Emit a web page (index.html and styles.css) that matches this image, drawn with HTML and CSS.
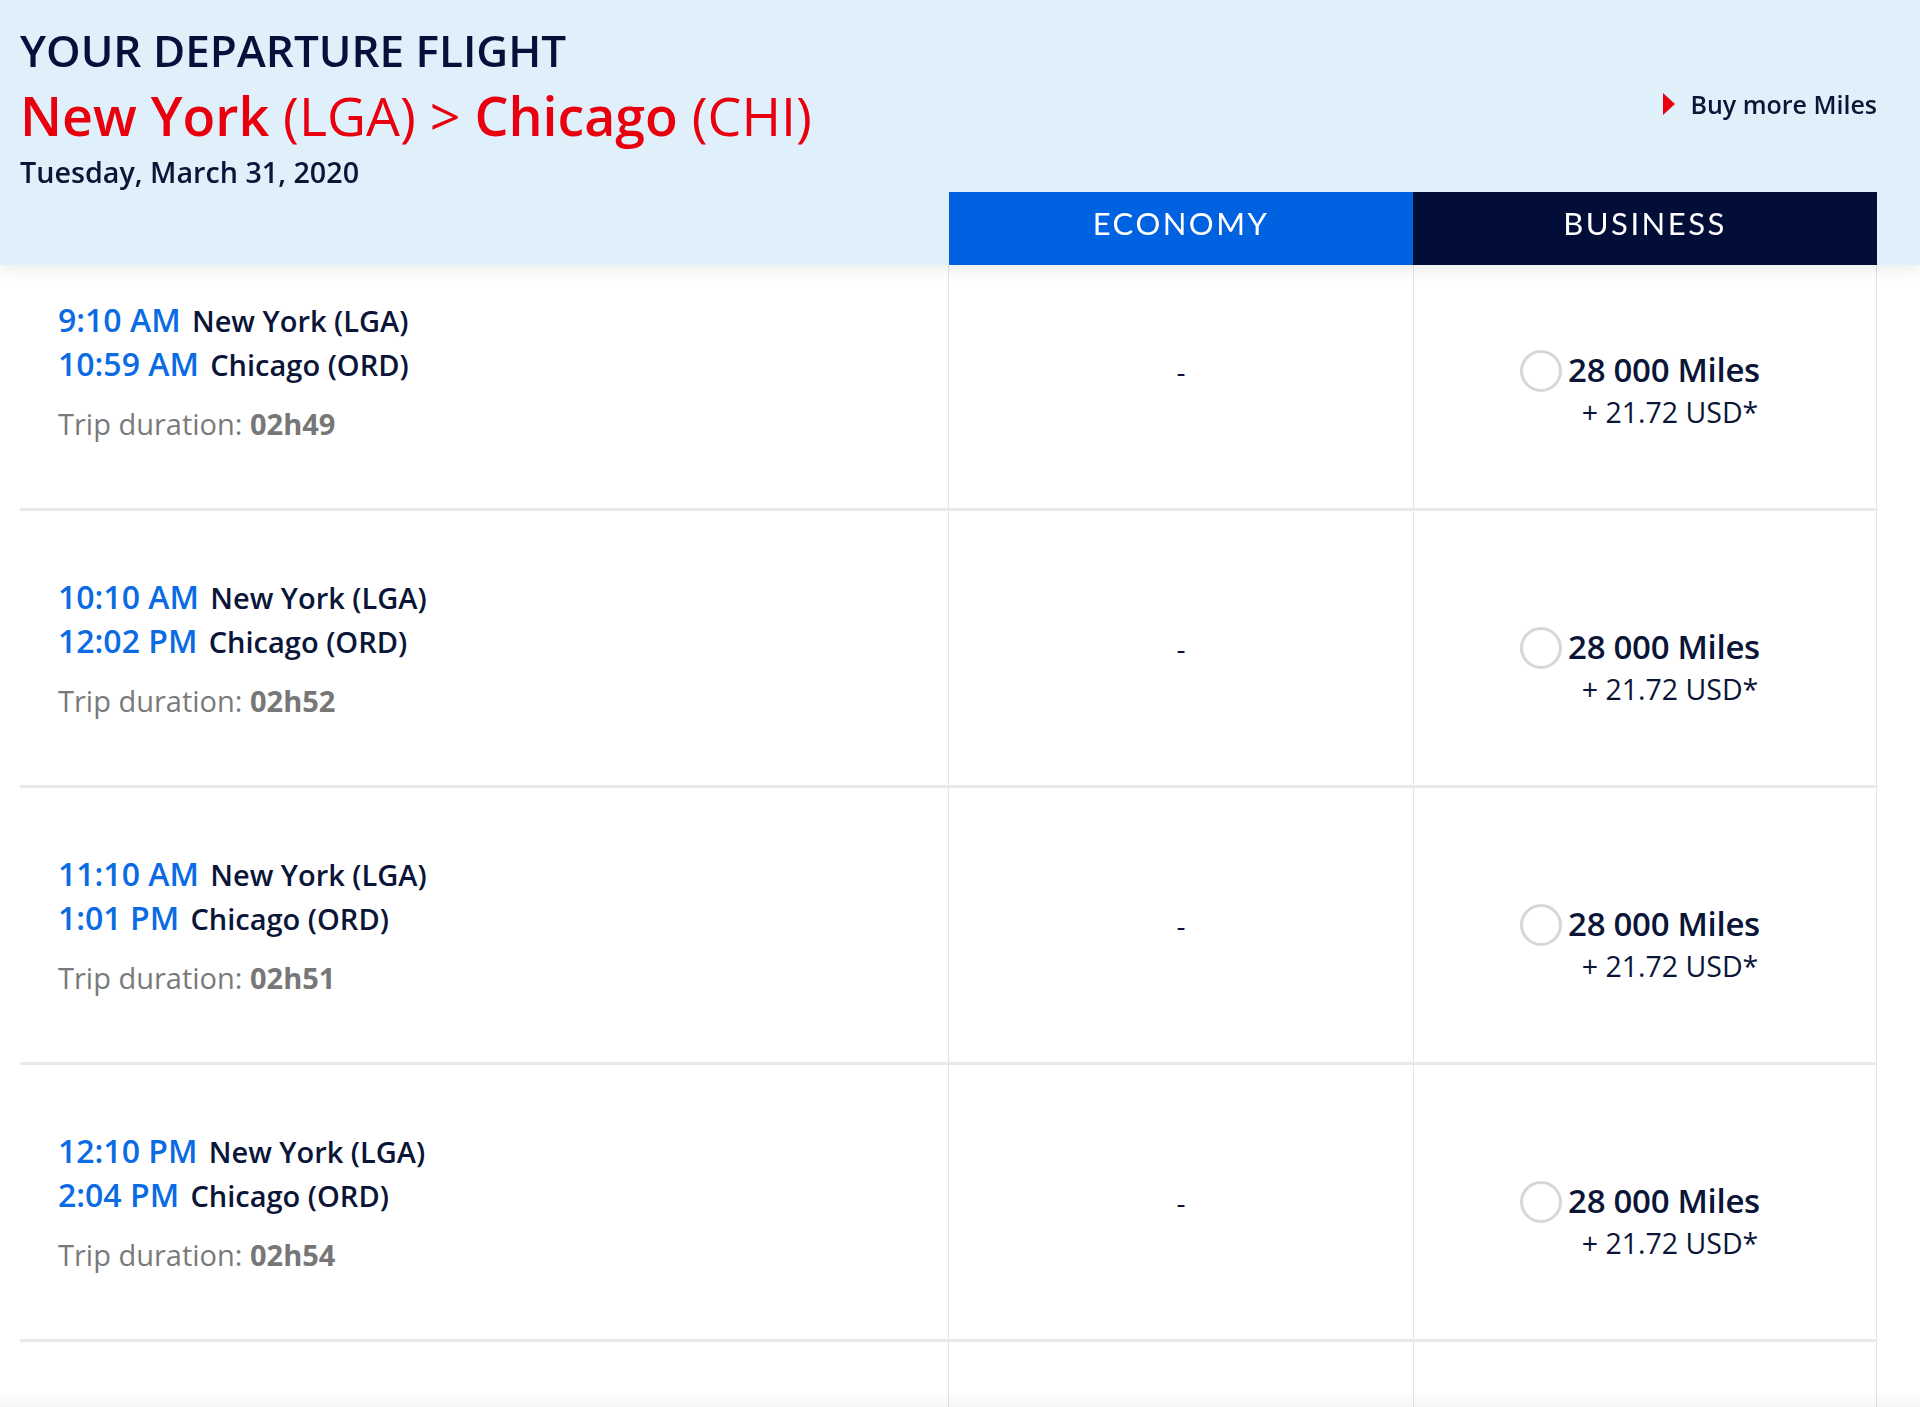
FILE: index.html
```html
<!DOCTYPE html>
<html lang="en">
<head>
<meta charset="utf-8">
<title>Your departure flight</title>
<link rel="stylesheet" href="styles.css">
</head>
<body>
<div class="page">
  <header class="top">
    <div class="top-main">
      <div class="heading">
        <h1 class="title">YOUR DEPARTURE FLIGHT</h1>
        <p class="route"><b>New York</b> (LGA) &gt; <b>Chicago</b> (CHI)</p>
        <p class="date">Tuesday, March 31, 2020</p>
      </div>
      <a class="buy" href="#"><span class="buy-arrow"></span>Buy more Miles</a>
    </div>
    <div class="tabs">
      <div class="tab tab-eco">ECONOMY</div>
      <div class="tab tab-bus">BUSINESS</div>
    </div>
  </header>

  <main class="flights">
    <div class="flight">
      <div class="cell cell-info">
        <div class="leg"><span class="time">9:10 AM</span> <span class="city">New York (LGA)</span></div>
        <div class="leg"><span class="time">10:59 AM</span> <span class="city">Chicago (ORD)</span></div>
        <div class="duration">Trip duration: <b>02h49</b></div>
      </div>
      <div class="cell cell-eco"><span class="dash">-</span></div>
      <div class="cell cell-bus">
        <div class="price">
          <span class="radio"></span>
          <div class="price-text">
            <div class="miles">28 000 Miles</div>
            <div class="usd">+ 21.72 USD*</div>
          </div>
        </div>
      </div>
    </div>

    <div class="flight">
      <div class="cell cell-info">
        <div class="leg"><span class="time">10:10 AM</span> <span class="city">New York (LGA)</span></div>
        <div class="leg"><span class="time">12:02 PM</span> <span class="city">Chicago (ORD)</span></div>
        <div class="duration">Trip duration: <b>02h52</b></div>
      </div>
      <div class="cell cell-eco"><span class="dash">-</span></div>
      <div class="cell cell-bus">
        <div class="price">
          <span class="radio"></span>
          <div class="price-text">
            <div class="miles">28 000 Miles</div>
            <div class="usd">+ 21.72 USD*</div>
          </div>
        </div>
      </div>
    </div>

    <div class="flight">
      <div class="cell cell-info">
        <div class="leg"><span class="time">11:10 AM</span> <span class="city">New York (LGA)</span></div>
        <div class="leg"><span class="time">1:01 PM</span> <span class="city">Chicago (ORD)</span></div>
        <div class="duration">Trip duration: <b>02h51</b></div>
      </div>
      <div class="cell cell-eco"><span class="dash">-</span></div>
      <div class="cell cell-bus">
        <div class="price">
          <span class="radio"></span>
          <div class="price-text">
            <div class="miles">28 000 Miles</div>
            <div class="usd">+ 21.72 USD*</div>
          </div>
        </div>
      </div>
    </div>

    <div class="flight">
      <div class="cell cell-info">
        <div class="leg"><span class="time">12:10 PM</span> <span class="city">New York (LGA)</span></div>
        <div class="leg"><span class="time">2:04 PM</span> <span class="city">Chicago (ORD)</span></div>
        <div class="duration">Trip duration: <b>02h54</b></div>
      </div>
      <div class="cell cell-eco"><span class="dash">-</span></div>
      <div class="cell cell-bus">
        <div class="price">
          <span class="radio"></span>
          <div class="price-text">
            <div class="miles">28 000 Miles</div>
            <div class="usd">+ 21.72 USD*</div>
          </div>
        </div>
      </div>
    </div>

    <div class="flight flight-more">
      <div class="cell cell-info"></div>
      <div class="cell cell-eco"></div>
      <div class="cell cell-bus"></div>
    </div>
  </main>
  <div class="bottom-fade"></div>
</div>
</body>
</html>
```

FILE: styles.css
```css
* { box-sizing: border-box; }

html, body {
  margin: 0;
  padding: 0;
  height: 100%;
  overflow: hidden;
  background: #ffffff;
}

body {
  font-family: "Open Sans", "Noto Sans", "Liberation Sans", sans-serif;
  color: #0a1538;
}

.page {
  height: 100vh;
  overflow: hidden;
  position: relative;
}

/* ---------- header ---------- */
.top {
  position: sticky;
  top: 0;
  z-index: 2;
  height: 265px;
  background: #dff0fa;
  box-shadow: 0 6px 14px rgba(0, 0, 0, 0.07);
  display: flex;
  flex-direction: column;
  padding: 0 43px 0 20px;
}

.top-main {
  flex: 1;
  display: flex;
  justify-content: space-between;
  align-items: flex-start;
}

.heading { padding-top: 24px; }

.title {
  margin: 0;
  font-size: 44px;
  line-height: 52px;
  font-weight: 600;
  color: #06103a;
}

.route {
  margin: 10px 0 0;
  font-size: 53.7px;
  line-height: 60px;
  font-weight: 400;
  color: #e8000f;
}

.route b { font-weight: 600; }

.date {
  margin: 8px 0 0;
  font-size: 28.7px;
  line-height: 36px;
  font-weight: 600;
  color: #0a1538;
}

.buy {
  margin-top: 86px;
  display: flex;
  align-items: center;
  gap: 15px;
  font-size: 25px;
  line-height: 36px;
  font-weight: 600;
  color: #0a1538;
  text-decoration: none;
}

.buy-arrow {
  width: 0;
  height: 0;
  border-top: 11px solid transparent;
  border-bottom: 11px solid transparent;
  border-left: 12px solid #e8000f;
}

.tabs {
  align-self: flex-end;
  width: 928px;
  height: 73px;
  display: grid;
  grid-template-columns: 1fr 1fr;
}

.tab {
  display: flex;
  align-items: center;
  justify-content: center;
  padding-bottom: 11px;
  font-family: "Lato", "Liberation Sans", sans-serif;
  font-size: 31px;
  font-weight: 400;
  letter-spacing: 2.5px;
  color: #ffffff;
}

.tab-eco { background: #0062e0; }
.tab-bus { background: #030e38; }

/* ---------- flights ---------- */
.flights {
  margin: -31px 43px 0 20px;
  position: relative;
  z-index: 1;
}

.flight {
  display: grid;
  grid-template-columns: 928px 465px 464px;
  height: 277px;
  border-bottom: 3px solid #e9e9e9;
}

.cell {
  height: 274px;
}

.cell-eco {
  border-left: 1px solid #e4e4e4;
  display: flex;
  align-items: center;
  justify-content: center;
}

.cell-bus {
  border-left: 1px solid #e4e4e4;
  border-right: 1px solid #e4e4e4;
  display: flex;
  justify-content: center;
  padding: 116px 10px 0 0;
}

.cell-info {
  padding: 64px 0 0 38px;
}

.leg {
  font-size: 32px;
  line-height: 44px;
  white-space: nowrap;
}

.time {
  font-weight: 600;
  color: #0a6be3;
}

.city {
  margin-left: 3px;
  font-size: 29px;
  line-height: 1;
  font-weight: 600;
  color: #0a1538;
}

.duration {
  margin-top: 20px;
  font-size: 29px;
  line-height: 36px;
  color: #7a7a7a;
}

.duration b {
  font-weight: 700;
  color: #777777;
}

.dash {
  font-size: 28px;
  line-height: 36px;
  color: #0a1538;
}

.price {
  display: flex;
  align-items: flex-start;
  gap: 6px;
  height: fit-content;
}

.radio {
  width: 42px;
  height: 42px;
  border-radius: 50%;
  border: 3px solid #d6d6db;
  background: #ffffff;
  flex: none;
}

.price-text {
  text-align: center;
}

.miles {
  font-size: 33px;
  line-height: 40px;
  font-weight: 600;
  color: #0a1538;
  letter-spacing: -0.3px;
}

.usd {
  margin-top: 2px;
  padding-left: 12px;
  font-size: 28.5px;
  line-height: 40px;
  font-weight: 400;
  color: #0a1538;
}

.flight-more { border-bottom: none; }

.bottom-fade {
  position: absolute;
  left: 0;
  right: 0;
  bottom: 0;
  height: 16px;
  background: linear-gradient(to bottom, rgba(0, 0, 0, 0), rgba(0, 0, 0, 0.035));
  z-index: 3;
}
```
